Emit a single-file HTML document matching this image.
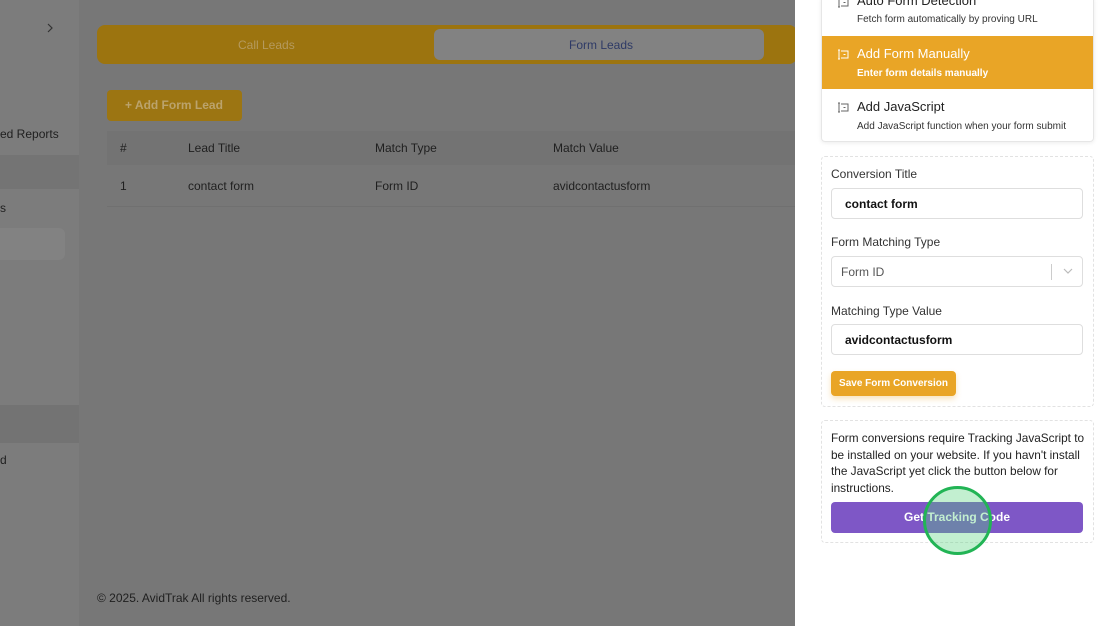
<!DOCTYPE html>
<html><head><style>
*{box-sizing:border-box;margin:0;padding:0}
body{width:1120px;height:626px;overflow:hidden;font-family:"Liberation Sans",sans-serif;background:#777;position:relative}
.side{position:absolute;left:0;top:0;width:79px;height:626px;background:#7c7c7c}
.t{position:absolute;color:#1f1f1f;font-size:12px;white-space:nowrap}
.panel{position:absolute;left:795px;top:0;width:325px;height:626px;background:#fff}
.box{position:absolute;border:1px dashed #e2e2e2;border-radius:4px;left:821px;width:273px}
.lbl{position:absolute;left:831px;font-size:12px;color:#333}
.inp{position:absolute;left:831px;width:252px;height:31px;border:1px solid #dedede;border-radius:4px;font-size:12px;font-weight:bold;color:#111;padding:8px 13px}
.ic{position:absolute;width:13px;height:11px}
</style></head><body>
<div class="side"></div>
<div style="position:absolute;left:0;top:155px;width:79px;height:34px;background:#747474"></div>
<div style="position:absolute;left:0;top:228px;width:65px;height:32px;background:#828282;border-radius:0 6px 6px 0"></div>
<div style="position:absolute;left:0;top:405px;width:79px;height:38px;background:#737373"></div>
<svg style="position:absolute;left:46px;top:22px" width="8" height="12"><path d="M2 2l4 4-4 4" fill="none" stroke="#333" stroke-width="1.2"/></svg>
<div class="t" style="left:0;top:127px;font-size:12px">ed Reports</div>
<div class="t" style="left:0;top:201px">s</div>
<div class="t" style="left:0;top:453px">d</div>

<div style="position:absolute;left:97px;top:25px;width:700px;height:39px;background:#9c740f;border-radius:8px"></div>
<div class="t" style="left:238px;top:38px;color:#b59a5e">Call Leads</div>
<div style="position:absolute;left:434px;top:29px;width:330px;height:31px;background:#828282;border-radius:6px"></div>
<div class="t" style="left:569px;top:38px;color:#2e3a66">Form Leads</div>

<div style="position:absolute;left:107px;top:90px;width:135px;height:31px;background:#9c7512;border-radius:4px"></div>
<div class="t" style="left:125px;top:98px;color:#bba36c;font-weight:bold">+ Add Form Lead</div>

<div style="position:absolute;left:107px;top:131px;width:690px;height:34px;background:#737373"></div>
<div class="t" style="left:120px;top:141px">#</div>
<div class="t" style="left:188px;top:141px">Lead Title</div>
<div class="t" style="left:375px;top:141px">Match Type</div>
<div class="t" style="left:553px;top:141px">Match Value</div>
<div style="position:absolute;left:107px;top:206px;width:690px;height:1px;background:#707070"></div>
<div class="t" style="left:120px;top:179px">1</div>
<div class="t" style="left:188px;top:179px">contact form</div>
<div class="t" style="left:375px;top:179px">Form ID</div>
<div class="t" style="left:553px;top:179px">avidcontactusform</div>
<div class="t" style="left:97px;top:591px">© 2025. AvidTrak All rights reserved.</div>

<div class="panel"></div>
<div style="position:absolute;left:821px;top:-5px;width:273px;height:147px;border:1px solid #e6e6e6;border-radius:4px;box-shadow:0 1px 4px rgba(0,0,0,.08)"></div>
<svg class="ic" style="left:836px;top:-3px" viewBox="0 0 13 11"><path d="M2 1h2M3 1v9M2 10h2M5 2h7v7H5M7.5 5.5h2" fill="none" stroke="#666" stroke-width="1"/></svg>
<div class="t" style="left:857px;top:-7px;font-size:13px;color:#222">Auto Form Detection</div>
<div class="t" style="left:857px;top:14px;font-size:10px;color:#333">Fetch form automatically by proving URL</div>
<div style="position:absolute;left:822px;top:36px;width:271px;height:53px;background:#e9a526"></div>
<svg class="ic" style="left:836px;top:49px" viewBox="0 0 13 11"><path d="M2 1h2M3 1v9M2 10h2M5 2h7v7H5M7.5 5.5h2" fill="none" stroke="#fff" stroke-width="1"/></svg>
<div class="t" style="left:857px;top:46px;font-size:13px;color:#fff">Add Form Manually</div>
<div class="t" style="left:857px;top:68px;font-size:10px;color:#fff;font-weight:bold">Enter form details manually</div>
<svg class="ic" style="left:836px;top:102px" viewBox="0 0 13 11"><path d="M2 1h2M3 1v9M2 10h2M5 2h7v7H5M7.5 5.5h2" fill="none" stroke="#666" stroke-width="1"/></svg>
<div class="t" style="left:857px;top:99px;font-size:13px;color:#222">Add JavaScript</div>
<div class="t" style="left:857px;top:121px;font-size:10px;color:#333">Add JavaScript function when your form submit</div>

<div class="box" style="top:156px;height:251px"></div>
<div class="lbl" style="top:167px">Conversion Title</div>
<div class="inp" style="top:188px">contact form</div>
<div class="lbl" style="top:235px">Form Matching Type</div>
<div class="inp" style="top:256px;font-weight:normal;color:#555;padding-left:9px">Form ID<span style="position:absolute;right:30px;top:7px;width:1px;height:16px;background:#ccc"></span><svg style="position:absolute;right:9px;top:11px" width="10" height="7"><path d="M1 1l4 4 4-4" fill="none" stroke="#bbb" stroke-width="1.2"/></svg></div>
<div class="lbl" style="top:304px">Matching Type Value</div>
<div class="inp" style="top:324px">avidcontactusform</div>
<div style="position:absolute;left:831px;top:371px;width:125px;height:25px;background:#e9a526;border-radius:4px;color:#fff;font-size:10px;font-weight:bold;text-align:center;line-height:25px;box-shadow:0 3px 6px rgba(233,165,38,.3)">Save Form Conversion</div>

<div class="box" style="top:420px;height:123px"></div>
<div class="lbl" style="top:430px;width:255px;line-height:16.5px;color:#222;font-size:11.8px">Form conversions require Tracking JavaScript to be installed on your website. If you havn't install the JavaScript yet click the button below for instructions.</div>
<div style="position:absolute;left:831px;top:502px;width:252px;height:31px;background:#7e57c6;border-radius:4px;color:#fff;font-size:12px;font-weight:bold;text-align:center;line-height:31px">Get Tracking Code</div>
<div style="position:absolute;left:923px;top:486px;width:69px;height:69px;border-radius:50%;border:3px solid #22b455;background:rgba(80,210,120,.35)"></div>
</body></html>
